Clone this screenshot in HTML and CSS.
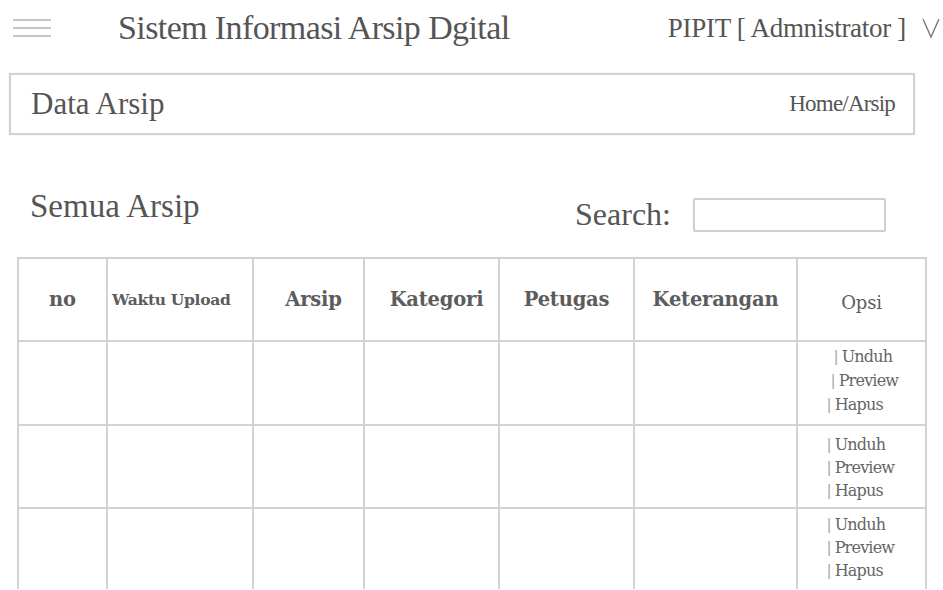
FILE: index.html
```html
<!DOCTYPE html>
<html lang="id">
<head>
<meta charset="utf-8">
<title>Data Arsip</title>
<link rel="stylesheet" href="styles.css">
</head>
<body>
<header class="topbar">
  <span class="burger"><i></i><i></i><i></i></span>
  <span class="brand">Sistem Informasi Arsip Dgital</span>
  <span class="user">PIPIT [ Admnistrator ]</span>
  <svg class="caret" viewBox="0 0 18 20" width="18" height="20"><polyline points="1,1 9,19 17,1" fill="none" stroke="#777" stroke-width="1.4"/></svg>
</header>

<section class="pagehead">
  <span class="pagetitle">Data Arsip</span>
  <span class="crumb">Home/Arsip</span>
</section>

<section class="listhead">
  <h2 class="listtitle">Semua Arsip</h2>
  <label class="search">Search: <input type="text" class="searchbox"></label>
</section>

<div class="tablewrap">
<table class="grid">
  <colgroup>
    <col class="c-no"><col class="c-time"><col class="c-arsip"><col class="c-kat"><col class="c-pet"><col class="c-ket"><col class="c-opsi">
  </colgroup>
  <thead>
    <tr>
      <th>no</th>
      <th class="small">Waktu Upload</th>
      <th class="nudge">Arsip</th>
      <th class="nudge">Kategori</th>
      <th>Petugas</th>
      <th>Keterangan</th>
      <th class="light">Opsi</th>
    </tr>
  </thead>
  <tbody>
    <tr>
      <td></td><td></td><td></td><td></td><td></td><td></td>
      <td class="opsi">
        <div class="op op-a"><b>|</b> Unduh</div>
        <div class="op op-b"><b>|</b> Preview</div>
        <div class="op op-c"><b>|</b> Hapus</div>
      </td>
    </tr>
    <tr class="mid">
      <td></td><td></td><td></td><td></td><td></td><td></td>
      <td class="opsi low">
        <div class="op op-c"><b>|</b> Unduh</div>
        <div class="op op-c"><b>|</b> Preview</div>
        <div class="op op-c"><b>|</b> Hapus</div>
      </td>
    </tr>
    <tr class="last">
      <td></td><td></td><td></td><td></td><td></td><td></td>
      <td class="opsi tight">
        <div class="op op-c"><b>|</b> Unduh</div>
        <div class="op op-c"><b>|</b> Preview</div>
        <div class="op op-c"><b>|</b> Hapus</div>
      </td>
    </tr>
  </tbody>
</table>
</div>
</body>
</html>
```

FILE: styles.css
```css
html, body {
  margin: 0;
  padding: 0;
  background: #fff;
}

body {
  font-family: "Liberation Serif", "Times New Roman", serif;
  color: #555;
  overflow: hidden;
}

/* top bar */
.topbar {
  display: flex;
  align-items: center;
  height: 56px;
  padding: 0 3px 0 13px;
}

.burger {
  display: flex;
  flex-direction: column;
  gap: 6px;
  width: 38px;
}

.burger i {
  display: block;
  height: 2px;
  background: #c4c4c4;
}

.brand {
  margin-left: 67px;
  font-size: 34px;
  letter-spacing: -0.6px;
  color: #555;
}

.user {
  margin-left: auto;
  font-size: 27px;
  letter-spacing: -0.3px;
  color: #555;
}

.caret {
  margin-left: 16px;
}

/* page heading box */
.pagehead {
  display: flex;
  justify-content: space-between;
  align-items: center;
  height: 58px;
  margin: 17px 28px 0 9px;
  padding: 0 18px 0 20px;
  border: 2px solid #d2d2d2;
  box-shadow: 0 0 1px #ddd;
  font-size: 31px;
}

.crumb {
  font-size: 23px;
  letter-spacing: -0.8px;
}

/* list heading */
.listhead {
  display: flex;
  justify-content: space-between;
  align-items: flex-start;
  margin: 53px 57px 0 30px;
}

.listtitle {
  margin: 0;
  font-weight: normal;
  font-size: 33px;
}

.search {
  display: flex;
  align-items: center;
  gap: 22px;
  margin-top: 8px;
  font-size: 32px;
}

.searchbox {
  width: 189px;
  height: 30px;
  padding: 0;
  border: 2px solid #cfcfcf;
  border-radius: 2px;
  box-sizing: content-box;
}

.tablewrap {
  margin: 24px 0 0 17px;
  height: 332px;
  overflow: hidden;
}

.grid {
  width: 908px;
  border-collapse: collapse;
  table-layout: fixed;
  font-family: "DejaVu Serif", serif;
}

.c-no { width: 89px; }
.c-time { width: 146px; }
.c-arsip { width: 111px; }
.c-kat { width: 135px; }
.c-pet { width: 135px; }
.c-ket { width: 163px; }
.c-opsi { width: 129px; }

.grid th,
.grid td {
  border: 2px solid #d3d3d3;
  padding: 0;
}

.grid th {
  height: 75px;
  font-size: 19.5px;
  font-weight: bold;
  color: #5c5c5c;
  letter-spacing: -0.2px;
}

.grid th.small {
  font-size: 15.5px;
  text-align: left;
  padding-left: 4px;
  letter-spacing: -0.3px;
}

.grid th.nudge {
  padding-left: 10px;
}

.grid th.light {
  font-weight: normal;
  font-size: 18px;
  padding-top: 6px;
}

.grid td {
  height: 79px;
}

.grid tr.mid td {
  height: 81px;
}

.grid tr.mid td.opsi {
  height: 74px;
}

.grid tr.last td {
  height: 110px;
}

.opsi {
  vertical-align: top;
  font-size: 16px;
  color: #666;
  letter-spacing: -0.8px;
  line-height: 24px;
  padding-top: 3px !important;
}

.opsi.low {
  line-height: 23px;
  padding-top: 7px !important;
}

.opsi.tight {
  line-height: 23px;
  padding-top: 4px !important;
}

.op b {
  font-weight: normal;
  color: #aaa;
  font-family: "Liberation Sans", sans-serif;
}

.op-a { padding-left: 36px; }
.op-b { padding-left: 33px; }
.op-c { padding-left: 29px; }
```
